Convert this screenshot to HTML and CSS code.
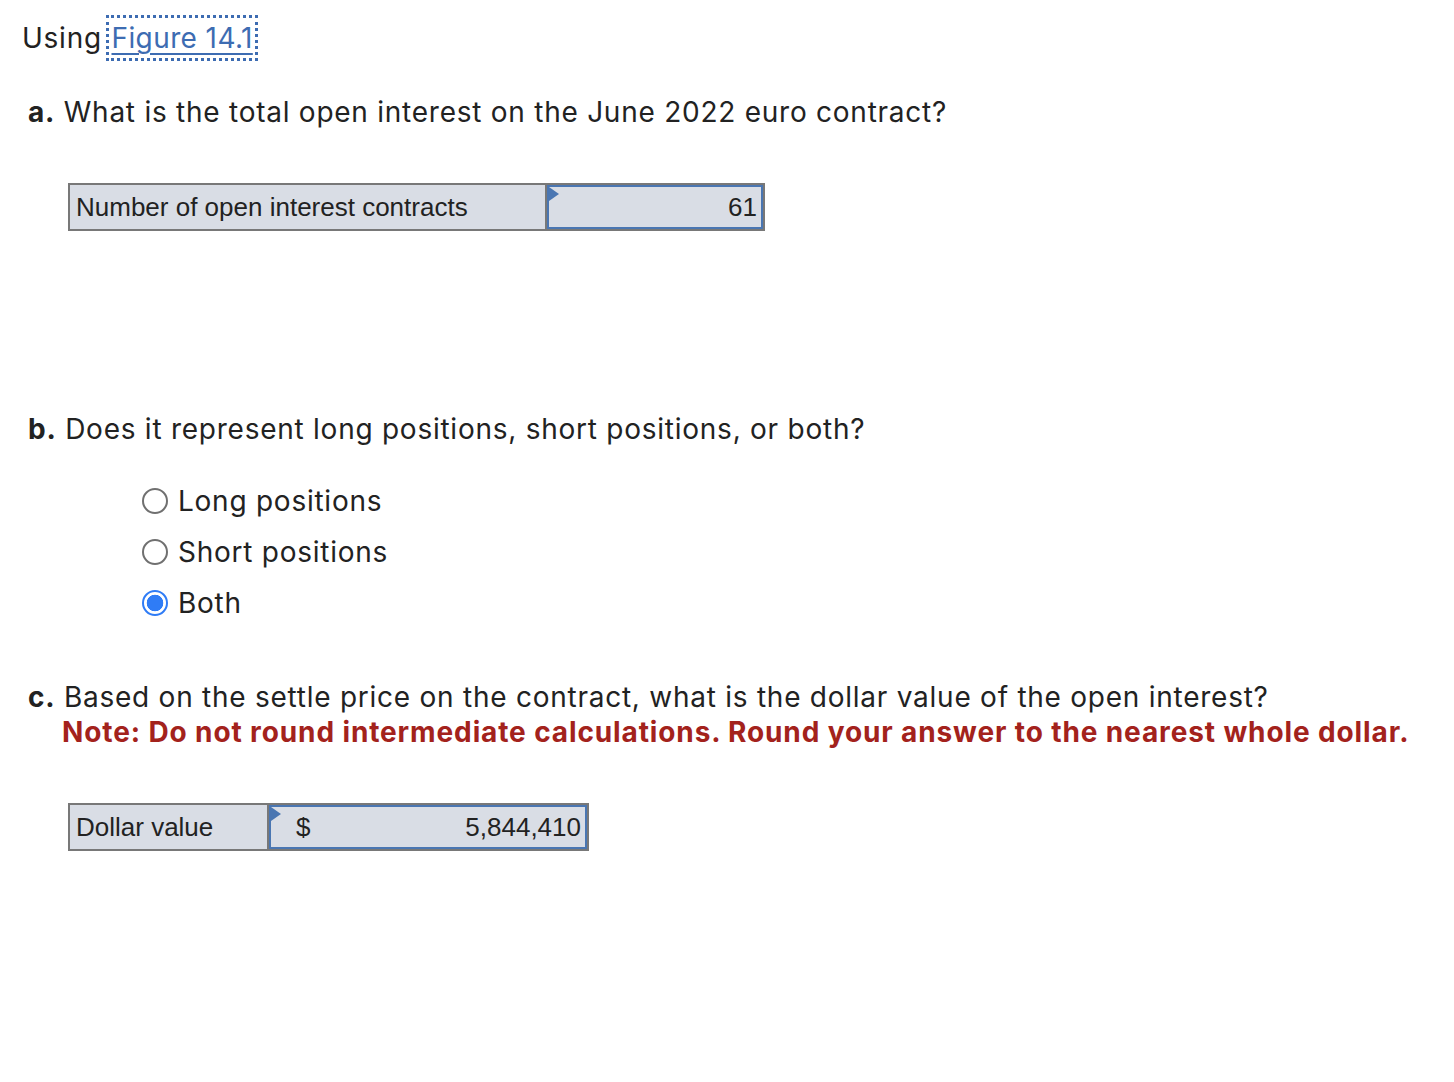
FILE: index.html
```html
<!DOCTYPE html>
<html lang="en">
<head>
<meta charset="utf-8">
<title>Figure 14.1 question</title>
<link rel="stylesheet" href="styles.css">
</head>
<body>
<main class="page">
  <div class="using">Using <a class="fig-link" href="#">Figure 14.1</a></div>

  <p class="question q-a"><b>a.</b> What is the total open interest on the June 2022 euro contract?</p>

  <div class="ans ans-1">
    <div class="ans-label">Number of open interest contracts</div>
    <div class="ans-input"><span class="flag"></span><span class="val">61</span></div>
  </div>

  <p class="question q-b"><b>b.</b> Does it represent long positions, short positions, or both?</p>

  <div class="radios">
    <label class="radio"><span class="dot"></span>Long positions</label>
    <label class="radio"><span class="dot"></span>Short positions</label>
    <label class="radio checked"><span class="dot"></span>Both</label>
  </div>

  <p class="question q-c"><b>c.</b> Based on the settle price on the contract, what is the dollar value of the open interest?<br><span class="note">Note: Do not round intermediate calculations. Round your answer to the nearest whole dollar.</span></p>

  <div class="ans ans-2">
    <div class="ans-label">Dollar value</div>
    <div class="ans-input"><span class="flag"></span><span class="cur">$</span><span class="val">5,844,410</span></div>
  </div>
</main>
</body>
</html>
```
FILE: styles.css
```css
html, body {
  margin: 0;
  padding: 0;
  background: #ffffff;
}

.page {
  font-family: "Inter", "Lato", sans-serif;
  font-size: 28px;
  letter-spacing: 0.75px;
  color: #222222;
  padding: 15px 0 0 0;
}

.using {
  margin-left: 22px;
  height: 46px;
  line-height: 46px;
}

.fig-link {
  display: inline-block;
  color: #3d6cb2;
  letter-spacing: 0.4px;
  text-decoration: underline;
  text-decoration-thickness: 2px;
  text-underline-offset: 5px;
  padding: 0 5px 0 6px;
  margin-left: -5px;
  outline: 3px dotted #3d6cb2;
  outline-offset: -3px;
}

.question {
  margin: 0;
  margin-left: 28px;
  padding-top: 2px;
  line-height: 35px;
}

.question b {
  font-weight: 700;
}

.q-a { margin-top: 32px; }
.q-b { margin-top: 179px; }
.q-c { margin-top: 50px; }

.note {
  display: inline-block;
  padding-left: 34px;
  color: #a3221c;
  font-weight: 700;
  letter-spacing: 0.88px;
}

.ans {
  display: flex;
  margin-left: 68px;
  height: 48px;
  box-sizing: border-box;
  border: 2px solid #787878;
  background: #d9dde5;
  font-family: "Liberation Sans", Arial, sans-serif;
  font-size: 26px;
  letter-spacing: 0;
  color: #222222;
}

.ans-1 { width: 697px; margin-top: 53px; }
.ans-2 { width: 521px; margin-top: 53px; }

.ans-label {
  display: flex;
  align-items: center;
  box-sizing: border-box;
  padding-left: 6px;
  border-right: 2px solid #787878;
}

.ans-1 .ans-label { width: 477px; }
.ans-2 .ans-label { width: 199px; }

.ans-input {
  position: relative;
  flex: 1;
  display: flex;
  align-items: center;
  justify-content: flex-end;
  box-sizing: border-box;
  border: 2px solid #4a76b2;
  padding: 0 4px 0 8px;
}

.ans-2 .ans-input {
  justify-content: space-between;
  padding-left: 25px;
}

.flag {
  position: absolute;
  left: 0;
  top: 0;
  width: 10px;
  height: 14px;
  background: #4a76b2;
  clip-path: polygon(0 0, 100% 50%, 0 100%);
}

.radios {
  margin-top: 28px;
  margin-left: 142px;
  display: flex;
  flex-direction: column;
}

.radio {
  display: flex;
  align-items: center;
  height: 51px;
}

.dot {
  width: 26px;
  height: 26px;
  box-sizing: border-box;
  border: 2px solid #707070;
  border-radius: 50%;
  background: #ffffff;
  margin-right: 10px;
  flex: none;
}

.radio.checked .dot {
  border: 2.5px solid #2f7cf6;
  background: radial-gradient(circle, #2f7cf6 0, #2f7cf6 8px, #ffffff 8.6px);
}
```
